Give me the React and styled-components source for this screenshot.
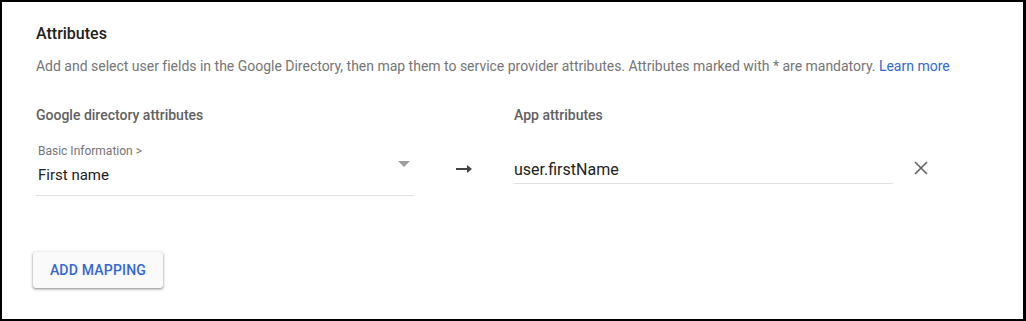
import React from 'react'
import styled, { createGlobalStyle } from 'styled-components'

const Global = createGlobalStyle`
  html, body { margin: 0; padding: 0; background: #fff; }
  body { font-family: Roboto, "Noto Sans", Arial, sans-serif; }
  * { box-sizing: border-box; }
`

const Frame = styled.div`
  width: 1026px;
  height: 321px;
  border-style: solid;
  border-color: #000;
  border-width: 2px 3px 2px 2px;
  padding: 22px 0 0 34px;
  background: #fff;
`

const Title = styled.div`
  font-size: 16px;
  font-weight: 500;
  color: #212121;
  line-height: 20px;
`

const Description = styled.div`
  margin-top: 12px;
  font-size: 14px;
  color: #757575;
  line-height: 20px;
  letter-spacing: -0.01px;
`

const Link = styled.a`
  color: #3367d6;
  text-decoration: none;
`

const Columns = styled.div`
  display: grid;
  grid-template-columns: 378px 100px 379px 40px;
  margin-top: 29px;
`

const Header = styled.div`
  font-size: 14px;
  font-weight: 500;
  color: #616161;
  line-height: 20px;
  grid-column: ${p => p.col};
`

const Select = styled.div`
  grid-column: 1;
  margin-top: 18px;
  height: 53px;
  border-bottom: 1px solid #e0e0e0;
  display: flex;
  align-items: flex-start;
  justify-content: space-between;
  padding-left: 2px;
`

const SelectText = styled.div`
  display: flex;
  flex-direction: column;
`

const SmallLabel = styled.span`
  font-size: 12px;
  color: #757575;
  line-height: 16px;
`

const Value = styled.span`
  font-size: 15px;
  color: #212121;
  line-height: 20px;
  margin-top: 6px;
`

const Caret = styled.span`
  width: 0;
  height: 0;
  border-left: 6px solid transparent;
  border-right: 6px solid transparent;
  border-top: 6px solid #9e9e9e;
  margin: 18px 4px 0 0;
`

const ArrowCell = styled.div`
  grid-column: 2;
  display: flex;
  justify-content: center;
  padding-top: 40px;
`

const Input = styled.div`
  grid-column: 3;
  margin-top: 28px;
  height: 31px;
  border-bottom: 1px solid #e0e0e0;
  font-size: 16px;
  color: #212121;
  line-height: 20px;
  padding-top: 7px;
`

const Remove = styled.div`
  grid-column: 4;
  padding: 35px 0 0 21px;
`

const Button = styled.button`
  margin-top: 56px;
  margin-left: -3px;
  width: 130px;
  height: 36px;
  border: none;
  border-radius: 3px;
  background: #fafafa;
  box-shadow: 0 1px 2px rgba(0,0,0,0.3), 0 1px 3px 1px rgba(0,0,0,0.15);
  color: #3367d6;
  font-family: inherit;
  font-size: 14px;
  font-weight: 500;
  letter-spacing: 0.2px;
  text-transform: uppercase;
`

export default function App() {
  return (
    <>
      <Global />
      <Frame>
        <Title>Attributes</Title>
        <Description>
          Add and select user fields in the Google Directory, then map them to service provider attributes. Attributes marked with * are mandatory. <Link href="#">Learn more</Link>
        </Description>
        <Columns>
          <Header col={1}>Google directory attributes</Header>
          <Header col={3}>App attributes</Header>
          <Select>
            <SelectText>
              <SmallLabel>Basic Information &gt;</SmallLabel>
              <Value>First name</Value>
            </SelectText>
            <Caret />
          </Select>
          <ArrowCell>
            <svg width="16" height="8" viewBox="0 0 16 8">
              <path d="M0 4h12" stroke="#424242" strokeWidth="2" />
              <path d="M11 0l5 4-5 4z" fill="#424242" />
            </svg>
          </ArrowCell>
          <Input>user.firstName</Input>
          <Remove>
            <svg width="14" height="14" viewBox="0 0 14 14">
              <path d="M1 1l12 12M13 1L1 13" stroke="#616161" strokeWidth="1.6" />
            </svg>
          </Remove>
        </Columns>
        <Button>Add mapping</Button>
      </Frame>
    </>
  )
}
